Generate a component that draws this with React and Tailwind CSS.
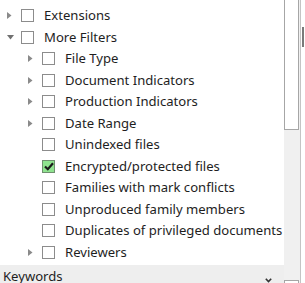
import React from "react";

const font = { fontFamily: '"Segoe UI", "Noto Sans", "Open Sans", sans-serif' };

function Arrow({ open }) {
  if (open) {
    return (
      <svg width="7" height="5" viewBox="0 0 7 5" className="block">
        <polygon points="0,0 7,0 3.5,4.5" fill="#707070" />
      </svg>
    );
  }
  return (
    <svg width="5" height="7" viewBox="0 0 5 7" className="block">
      <polygon points="0,0 4.5,3.5 0,7" fill="#8a8a8a" />
    </svg>
  );
}

function Box({ checked }) {
  return (
    <div
      className={
        "w-[13px] h-[13px] border flex items-center justify-center shrink-0 " +
        (checked ? "bg-[#8fe38f] border-[#6f8f6f]" : "bg-white border-[#8c8c8c]")
      }
    >
      {checked && (
        <svg width="10" height="9" viewBox="0 0 10 9">
          <polyline points="1,4.5 3.8,7.2 9,1.2" fill="none" stroke="#1a1a1a" strokeWidth="2.2" />
        </svg>
      )}
    </div>
  );
}

function Row({ level, arrow, open, checked, label }) {
  return (
    <div className={"flex items-center shrink-0 h-[21.5px] " + (level === 0 ? "pl-[7px]" : "pl-[28px]")}>
      <div className="w-[14px] flex items-center">{arrow && <Arrow open={open} />}</div>
      <Box checked={checked} />
      <span className="ml-[10px] text-[13.1px] text-[#1e1e1e] whitespace-nowrap leading-none">{label}</span>
    </div>
  );
}

export default function App() {
  const rows = [
    { level: 0, arrow: true, label: "Extensions" },
    { level: 0, arrow: true, open: true, label: "More Filters" },
    { level: 1, arrow: true, label: "File Type" },
    { level: 1, arrow: true, label: "Document Indicators" },
    { level: 1, arrow: true, label: "Production Indicators" },
    { level: 1, arrow: true, label: "Date Range" },
    { level: 1, label: "Unindexed files" },
    { level: 1, checked: true, label: "Encrypted/protected files" },
    { level: 1, label: "Families with mark conflicts" },
    { level: 1, label: "Unproduced family members" },
    { level: 1, label: "Duplicates of privileged documents" },
    { level: 1, arrow: true, label: "Reviewers" },
  ];
  return (
    <div className="w-[305px] h-[283px] overflow-hidden bg-white flex" style={font}>
      <div className="w-[284px] flex flex-col pt-[5px]">
        {rows.map((r, i) => (
          <Row key={i} {...r} />
        ))}
        <div className="shrink-0 mt-[2px] h-[22px] bg-[#eeeeee] flex items-center justify-between pl-[3px] pr-[12px] pt-[2px]">
          <span className="text-[13.1px] text-[#1e1e1e] leading-none">Keywords</span>
          <svg width="7" height="5" viewBox="0 0 7 5" className="mt-[6px]">
            <polyline points="0.8,0.8 3.5,3.6 6.2,0.8" fill="none" stroke="#333" strokeWidth="1.6" />
          </svg>
        </div>
      </div>
      <div className="w-[17px] h-full bg-[#f0f0f0] border-r border-[#c4c4c4] flex flex-col">
        <div className="w-[15px] h-[130px] bg-white border border-[#a6a6a6] border-t-0" />
        <div className="flex-1" />
        <div className="w-[15px] h-[3px] border border-b-0 border-[#a6a6a6] bg-white" />
      </div>
      <div className="flex-1 pt-[27px] pl-[1px]">
        <div className="w-[2px] h-[20px] bg-[#7a7a7a]" />
      </div>
    </div>
  );
}
